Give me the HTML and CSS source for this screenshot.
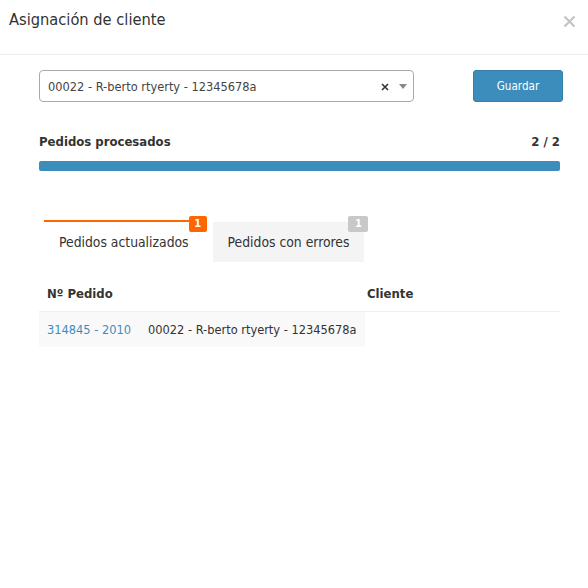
FILE: index.html
```html
<!DOCTYPE html>
<html lang="es">
<head>
<meta charset="utf-8">
<title>Asignación de cliente</title>
<link rel="stylesheet" href="styles.css">
</head>
<body>
<div class="modal">
  <div class="modal-header">
    <h4 class="modal-title">Asignación de cliente</h4>
    <span class="close">
      <svg width="13" height="13" viewBox="0 0 13 13"><path d="M1.5 1.5L11.5 11.5M11.5 1.5L1.5 11.5" stroke="#c4c4c4" stroke-width="2.2"/></svg>
    </span>
  </div>
  <div class="modal-body">
    <div class="form-row">
      <div class="select">
        <span class="select-text">00022 - R-berto rtyerty - 12345678a</span>
        <span class="select-clear">
          <svg width="8" height="8" viewBox="0 0 8 8"><path d="M1 1L7 7M7 1L1 7" stroke="#333" stroke-width="1.6"/></svg>
        </span>
        <span class="select-arrow"></span>
      </div>
      <button class="btn">Guardar</button>
    </div>
    <div class="progress-label">
      <span>Pedidos procesados</span>
      <span>2 / 2</span>
    </div>
    <div class="progress"><div class="progress-bar" style="width:100%"></div></div>

    <div class="tabs">
      <div class="tab active">Pedidos actualizados<span class="badge badge-orange">1</span></div>
      <div class="tab">Pedidos con errores<span class="badge badge-gray">1</span></div>
    </div>

    <div class="table">
      <div class="th th-first">Nº Pedido</div>
      <div class="th th-second">Cliente</div>
      <div class="row-cell"><a class="link">314845 - 2010</a><span>00022 - R-berto rtyerty - 12345678a</span></div>
    </div>
  </div>
</div>
</body>
</html>
```

FILE: styles.css
```css
* { box-sizing: border-box; }
html, body { margin: 0; padding: 0; background: #fff; }
body {
  font-family: "DejaVu Sans Condensed", "DejaVu Sans", sans-serif;
  font-stretch: condensed;
  font-size: 12.7px;
  color: #333;
}
.modal { width: 588px; height: 588px; }
.modal-header {
  height: 55px;
  border-bottom: 1px solid #ececec;
  display: flex;
  justify-content: space-between;
  align-items: flex-start;
  padding: 10px 12px 0 9px;
}
.modal-title {
  margin: 0;
  font-weight: normal;
  font-size: 16.3px;
  line-height: 20px;
  color: #333;
}
.close { display: block; margin-top: 5px; width: 13px; height: 13px; }
.close svg { display: block; }
.modal-body { padding: 15px 25px 0 39px; }
.form-row { display: flex; align-items: center; justify-content: space-between; height: 32px; }
.select {
  width: 375px;
  height: 32px;
  border: 1px solid #aaa;
  border-radius: 4px;
  display: flex;
  align-items: center;
  padding: 0 6px 0 8px;
}
.select-text { flex: 1; color: #444; }
.select-clear { display: block; width: 8px; height: 8px; margin-right: 10px; margin-top: 1px; }
.select-clear svg { display: block; }
.select-arrow {
  width: 0; height: 0;
  border-left: 4px solid transparent;
  border-right: 4px solid transparent;
  border-top: 5px solid #888;
}
.btn {
  width: 90px;
  height: 32px;
  border: 1px solid #367fa9;
  background: #3c8dbc;
  color: #fff;
  border-radius: 3px;
  font-family: inherit;
  font-stretch: condensed;
  font-size: 11.6px;
  padding: 0;
}
.progress-label {
  margin: 31px 3px 0 0;
  display: flex;
  justify-content: space-between;
  font-weight: bold;
  font-size: 13px;
  line-height: 18px;
}
.progress {
  margin: 10px 3px 0 0;
  height: 10px;
  background: #f0f0f0;
  border-radius: 2px;
}
.progress-bar { height: 100%; background: #3c8dbc; border-radius: 2px; }
.tabs {
  display: flex;
  gap: 10px;
  align-items: flex-end;
  margin: 49px 0 0 5px;
}
.tab {
  position: relative;
  height: 40px;
  padding: 0 15px;
  display: flex;
  align-items: center;
  background: #f4f4f4;
  font-size: 13.8px;
}
.tab.active {
  background: #fff;
  border-top: 2px solid #ff6600;
  height: 42px;
  padding: 0 14px 0 15px;
}
.badge {
  position: absolute;
  right: -4px;
  top: -6px;
  min-width: 18px;
  height: 16px;
  padding: 0 5px;
  border-radius: 2px;
  color: #fff;
  font-size: 11px;
  font-weight: bold;
  line-height: 16px;
  text-align: center;
}
.badge-orange { background: #ff6600; }
.badge-gray { background: #c8c8c8; min-width: 20px; }
.table {
  margin: 14px 3px 0 0;
  display: grid;
  grid-template-columns: 326px 1fr;
}
.th {
  font-weight: bold;
  font-size: 13px;
  height: 36px;
  display: flex;
  align-items: center;
  border-bottom: 1px solid #f0f0f0;
}
.th-first { padding-left: 8px; }
.th-second { padding-left: 2px; }
.row-cell {
  background: #f9f9f9;
  height: 35px;
  display: flex;
  align-items: center;
  padding-left: 8px;
  gap: 17px;
}
.link { color: #3c8dbc; text-decoration: none; }
```
